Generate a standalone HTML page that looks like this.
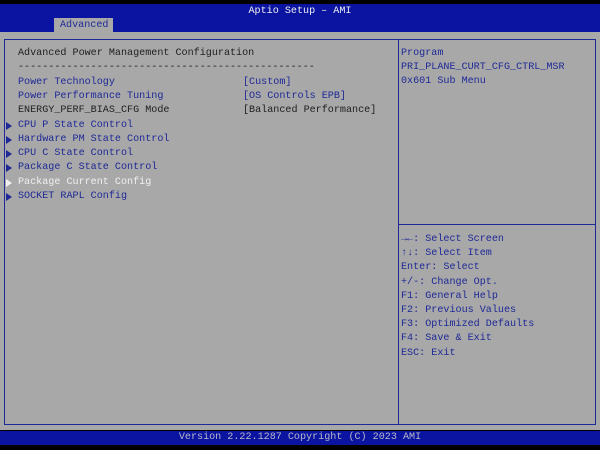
<!DOCTYPE html>
<html><head><style>
*{margin:0;padding:0}
body{width:600px;height:450px;background:#000;position:relative;overflow:hidden;font-family:"Liberation Mono","DejaVu Sans Mono",monospace;font-size:10.1px}
.a{position:absolute;white-space:pre;line-height:14px}
.b{color:#1e2896}
.k{color:#202020}
.w{color:#f0f0f0}
.t{position:absolute;width:0;height:0;border-top:4px solid transparent;border-bottom:4px solid transparent;border-left:6px solid}
.tb{border-left-color:#1e2896}.tw{border-left-color:#f0f0f0}
</style></head><body>
<div style="position:absolute;left:0;top:4px;width:600px;height:28px;background:#0a14a0"></div>
<div class="a w" style="left:0;width:600px;top:5px;text-align:center">Aptio Setup – AMI</div>
<div style="position:absolute;left:54px;top:18px;width:59px;height:14px;background:#a8a8a8"></div>
<div class="a b" style="left:60px;top:19px">Advanced</div>
<div style="position:absolute;left:0;top:32px;width:600px;height:398px;background:#a8a8a8"></div>
<div style="position:absolute;left:4px;top:39px;width:590px;height:384px;border:1px solid #1e2896"></div>
<div style="position:absolute;left:398px;top:39px;width:1px;height:385px;background:#1e2896"></div>
<div style="position:absolute;left:399px;top:224px;width:196px;height:1px;background:#1e2896"></div>
<div style="position:absolute;left:0;top:431px;width:600px;height:14px;background:#0a14a0"></div>
<div class="a" style="left:0;width:600px;top:431px;text-align:center;color:#b8b8c8">Version 2.22.1287 Copyright (C) 2023 AMI</div>
<div class="a k" style="left:18px;top:47px">Advanced Power Management Configuration</div>
<div class="a k" style="left:18px;top:61px">-------------------------------------------------</div>
<div class="a b" style="left:18px;top:76px">Power Technology</div>
<div class="a b" style="left:243px;top:76px">[Custom]</div>
<div class="a b" style="left:18px;top:90px">Power Performance Tuning</div>
<div class="a b" style="left:243px;top:90px">[OS Controls EPB]</div>
<div class="a k" style="left:18px;top:104px">ENERGY_PERF_BIAS_CFG Mode</div>
<div class="a k" style="left:243px;top:104px">[Balanced Performance]</div>
<div class="t tb" style="left:6px;top:122px"></div><div class="a b" style="left:18px;top:119px">CPU P State Control</div>
<div class="t tb" style="left:6px;top:136px"></div><div class="a b" style="left:18px;top:133px">Hardware PM State Control</div>
<div class="t tb" style="left:6px;top:150px"></div><div class="a b" style="left:18px;top:147px">CPU C State Control</div>
<div class="t tb" style="left:6px;top:164px"></div><div class="a b" style="left:18px;top:161px">Package C State Control</div>
<div class="t tw" style="left:6px;top:179px"></div><div class="a w" style="left:18px;top:176px">Package Current Config</div>
<div class="t tb" style="left:6px;top:193px"></div><div class="a b" style="left:18px;top:190px">SOCKET RAPL Config</div>
<div class="a b" style="left:401px;top:47px">Program
PRI_PLANE_CURT_CFG_CTRL_MSR
0x601 Sub Menu</div>
<div class="a b" style="left:401px;top:233px;line-height:14.2px">→←: Select Screen
↑↓: Select Item
Enter: Select
+/-: Change Opt.
F1: General Help
F2: Previous Values
F3: Optimized Defaults
F4: Save &amp; Exit
ESC: Exit</div>
</body></html>
